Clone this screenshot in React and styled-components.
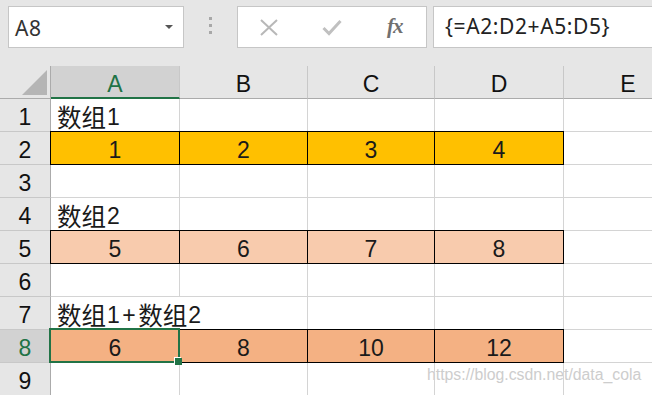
import React from 'react'
import styled, { createGlobalStyle } from 'styled-components'

const GlobalStyle = createGlobalStyle`
html, body {
  margin: 0;
  padding: 0;
  background: #fff;
  overflow: hidden;
}
`

const GREEN = '#217346'
const CELL_FONT = '"Liberation Sans", "Noto Sans CJK SC", sans-serif'

const Page = styled.div`
position: relative;
width: 652px;
height: 395px;
overflow: hidden;
background: #fff;
`

const Toolbar = styled.div`
display: flex;
align-items: flex-start;
height: 66px;
box-sizing: border-box;
padding: 6px 0 0 8px;
background: #e6e6e6;
`

const Box = styled.div`
box-sizing: border-box;
height: 42px;
background: #fff;
border: 1px solid #c6c6c6;
display: flex;
align-items: center;
`

const NameBox = styled(Box)`
width: 176px;
padding: 1px 10px 0 6px;
justify-content: space-between;
font-family: "Noto Sans", sans-serif;
font-size: 21px;
letter-spacing: 0.5px;
color: #333;
`

const Caret = styled.span`
width: 0;
height: 0;
border-left: 4px solid transparent;
border-right: 4px solid transparent;
border-top: 4px solid #555;
margin-top: -2px;
`

const Grip = styled.div`
width: 53px;
height: 42px;
display: flex;
flex-direction: column;
align-items: center;
justify-content: center;
gap: 4px;
padding-bottom: 4px;
box-sizing: border-box;
`

const GripDot = styled.span`
width: 3px;
height: 3px;
background: #a8a8a8;
`

const FxButtons = styled(Box)`
width: 190px;
margin-right: 6px;
`

const FxSlot = styled.div`
flex: 1;
display: flex;
align-items: center;
justify-content: center;
height: 100%;
`

const FxText = styled.span`
font-family: "Liberation Serif", serif;
font-style: italic;
font-weight: bold;
font-size: 21px;
color: #707070;
letter-spacing: -1px;
margin-bottom: 2px;
`

const FormulaInput = styled(Box)`
flex: 1;
border-right: none;
padding: 0 0 2px 11px;
font-family: "Noto Sans", sans-serif;
font-size: 21px;
letter-spacing: 0.6px;
color: #222;
`

const Sheet = styled.div`
display: grid;
grid-template-columns: 51px 129px 128px 127px 129px 129px;
grid-template-rows: 33px repeat(9, 33px);
font-family: ${CELL_FONT};
font-size: 23px;
color: #1a1a1a;
`

const Corner = styled.div`
background: #e6e6e6;
border-right: 1px solid #ababab;
border-bottom: 1px solid #ababab;
box-sizing: border-box;
display: flex;
align-items: flex-end;
justify-content: flex-end;
padding: 0 3px 3px 0;
`

const ColHead = styled.div`
box-sizing: border-box;
display: flex;
align-items: center;
justify-content: center;
padding-top: 5px;
background: ${p => (p.$active ? '#d2d2d2' : '#e6e6e6')};
color: ${p => (p.$active ? GREEN : '#111')};
border-right: 1px solid #c8c8c8;
border-bottom: ${p => (p.$active ? `2px solid ${GREEN}` : '1px solid #ababab')};
`

const RowHead = styled.div`
box-sizing: border-box;
display: flex;
align-items: center;
justify-content: center;
padding-top: 5px;
background: ${p => (p.$active ? '#d2d2d2' : '#e6e6e6')};
color: ${p => (p.$active ? GREEN : '#111')};
border-right: 1px solid #ababab;
border-bottom: 1px solid #c8c8c8;
`

const Cell = styled.div`
box-sizing: border-box;
position: ${p => (p.$selected ? 'relative' : 'static')};
display: flex;
align-items: center;
justify-content: ${p => (p.$center ? 'center' : 'flex-start')};
padding: 5px 6px 0;
white-space: nowrap;
min-width: 0;
background: ${p => p.$fill || 'transparent'};
border-right: 1px solid ${p => (p.$fill ? '#000' : p.$spill ? 'transparent' : '#d4d4d4')};
border-bottom: 1px solid ${p => (p.$fill ? '#000' : '#d4d4d4')};
box-shadow: ${p => (p.$fill ? '0 -1px 0 #000, -1px 0 0 #000, -1px -1px 0 #000' : 'none')};
`

const Han = styled.span`
font-family: "Noto Sans CJK SC", sans-serif;
font-size: 24.5px;
line-height: 1;
`

const Latin = styled.span`
letter-spacing: 2.5px;
padding-left: 1px;
`

const Selection = styled.div`
position: absolute;
top: -2px;
left: -2px;
right: -1px;
bottom: -1px;
border: 2px solid ${GREEN};
pointer-events: none;
`

const FillHandle = styled.span`
position: absolute;
right: -4px;
bottom: -4px;
width: 7px;
height: 7px;
background: ${GREEN};
box-shadow: -1px -1px 0 #fff;
`

const Watermark = styled.div`
position: absolute;
left: 427px;
top: 366px;
font-family: "Liberation Sans", sans-serif;
font-size: 15.8px;
color: #cdcdcd;
text-shadow: 0 0 1px #fff;
`

const COLS = ['A', 'B', 'C', 'D', 'E']

const ROWS = [
  { n: 1, label: [['数组'], '1'] },
  { n: 2, fill: '#ffc000', values: [1, 2, 3, 4] },
  { n: 3 },
  { n: 4, label: [['数组'], '2'] },
  { n: 5, fill: '#f8cbad', values: [5, 6, 7, 8] },
  { n: 6 },
  { n: 7, label: [['数组'], '1+', ['数组'], '2'], spill: true },
  { n: 8, fill: '#f4b183', values: [6, 8, 10, 12], selected: true },
  { n: 9 },
]

function Label({ parts }) {
  return parts.map((p, i) => (Array.isArray(p) ? <Han key={i}>{p[0]}</Han> : <Latin key={i}>{p}</Latin>))
}

function Row({ row }) {
  return (
    <>
      <RowHead $active={row.selected}>{row.n}</RowHead>
      {COLS.map((c, i) => {
        if (row.values && i < 4) {
          return (
            <Cell key={c} $fill={row.fill} $center $selected={row.selected && i === 0}>
              {row.values[i]}
              {row.selected && i === 0 && (
                <Selection>
                  <FillHandle />
                </Selection>
              )}
            </Cell>
          )
        }
        if (row.label && i === 0) {
          return (
            <Cell key={c} $spill={row.spill}>
              <Label parts={row.label} />
            </Cell>
          )
        }
        return <Cell key={c} />
      })}
    </>
  )
}

export default function App() {
  return (
    <Page>
      <GlobalStyle />
      <Toolbar>
        <NameBox>
          <span>A8</span>
          <Caret />
        </NameBox>
        <Grip>
          <GripDot />
          <GripDot />
          <GripDot />
        </Grip>
        <FxButtons>
          <FxSlot>
            <svg width="18" height="17" viewBox="0 0 18 17">
              <path d="M1 1 L17 16 M17 1 L1 16" stroke="#b8b8b8" strokeWidth="2" fill="none" />
            </svg>
          </FxSlot>
          <FxSlot>
            <svg width="20" height="17" viewBox="0 0 20 17">
              <path d="M1.5 9 L7 14.5 L18.5 2" stroke="#c0c0c0" strokeWidth="3" fill="none" />
            </svg>
          </FxSlot>
          <FxSlot>
            <FxText>fx</FxText>
          </FxSlot>
        </FxButtons>
        <FormulaInput>{'{=A2:D2+A5:D5}'}</FormulaInput>
      </Toolbar>
      <Sheet>
        <Corner>
          <svg width="25" height="25" viewBox="0 0 25 25">
            <polygon points="25,0 25,25 0,25" fill="#b5b5b5" />
          </svg>
        </Corner>
        {COLS.map((c, i) => (
          <ColHead key={c} $active={i === 0}>{c}</ColHead>
        ))}
        {ROWS.map(r => (
          <Row key={r.n} row={r} />
        ))}
      </Sheet>
      <Watermark>https://blog.csdn.net/data_cola</Watermark>
    </Page>
  )
}
